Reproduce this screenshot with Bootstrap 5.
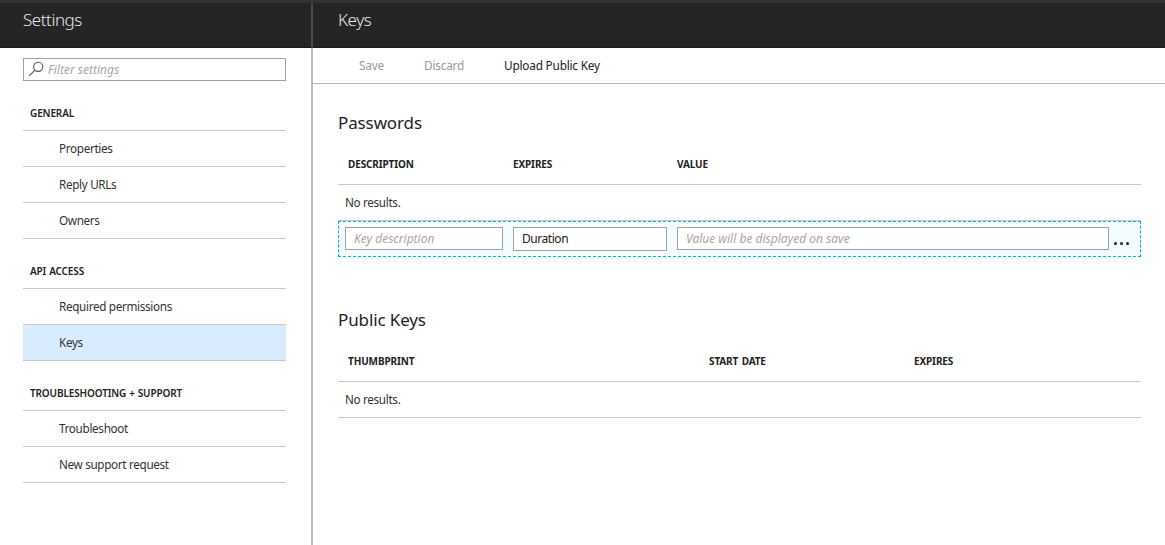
<!DOCTYPE html>
<html lang="en">
<head>
<meta charset="utf-8">
<meta name="viewport" content="width=device-width, initial-scale=1">
<title>Settings - Keys</title>
<link href="https://cdn.jsdelivr.net/npm/bootstrap@5.3.0/dist/css/bootstrap.min.css" rel="stylesheet">
<style>
body{font:11.7px/16px "Segoe UI","Noto Sans","Open Sans",sans-serif;letter-spacing:-.32px;color:#333;background:#fff;height:545px;overflow:hidden}
.topstrip{height:3px;background:#333}
.side{width:313px;border-right:2px solid #b8b8b8}
.blade-head{height:45px;background:#252525;color:#e8e8e8;border-bottom:1px solid #1d1a1d}
.side .blade-head{width:313px;border-right:2px solid #4b4b4b}
.blade-head h1{font-size:17px;line-height:22px;font-weight:300;letter-spacing:-.45px;padding:6px 0 0 25px}
.side .blade-head h1{padding-left:23px}
.side-body{width:263px;margin-left:23px}
.field{height:23px;border:1px solid #a0a1a2;border-radius:0;padding:0 8px 1px;font-size:12px;line-height:20px;color:#222;background:#fff;letter-spacing:0}
.field::placeholder{color:#a6a6a6;font-style:italic;opacity:1}
.field:focus{box-shadow:none}
.filter{margin-top:10px}
.filter .field{padding-left:24px}
.filter svg{left:5px;top:3px}
.sec{font-size:10px;font-weight:600;color:#222;letter-spacing:-.13px;word-spacing:.5px;padding:8px 7px 0;height:34px;line-height:16px;border-bottom:1px solid #c8c8c8}
.menu .list-group-item,.menu .list-group-item:last-child{height:36px;padding:9px 36px 0;border:0;border-bottom:1px solid #c8c8c8;color:#333;line-height:16px;background:#fff}
.menu .list-group-item.active{background:#d9ecff;color:#333;margin-top:0}
.menu{margin-bottom:16px}
.filter+.sec{margin-top:16px}
.toolbar{height:36px;border-bottom:1px solid #b8b8b8;padding:0 0 1px 46px}
.toolbar .btn{font-size:11.8px;line-height:16px;border:0;padding:0;letter-spacing:-.2px;color:#222;text-align:left}
.toolbar .btn:disabled{color:#999;opacity:1}
.cmd-save{width:65px}
.cmd-discard{width:80px}
.content{margin:0 24px 0 25px}
.content section{padding-top:27px}
.content section+section{padding-top:51px}
.content h2{font-size:17px;line-height:24px;font-weight:400;color:#222;letter-spacing:-.12px;margin-bottom:15px}
.cols{display:grid;height:35px;font-size:10px;font-weight:700;color:#222;letter-spacing:-.13px;word-spacing:1px;padding:6px 10px 0;border-bottom:1px solid #c8c8c8}
.cols-pw{grid-template-columns:165px 164px 1fr}
.cols-pk{grid-template-columns:361px 205px 1fr}
.none{height:36px;padding:9px 7px 0;border-bottom:1px solid #c8c8c8}
.newrow{display:grid;grid-template-columns:158px 154px 432px auto;column-gap:10px;height:36px;padding:5px 6px;border:1px dashed #00b3ee;background:#f3fcff}
.duration{height:24px;line-height:22px;letter-spacing:-.45px}
.dots{margin-left:-5px;padding-top:15px;gap:3px}
.dots i{width:3px;height:3px;border-radius:50%;background:#222}
</style>
</head>
<body>
<div class="topstrip"></div>
<div class="d-flex h-100">
  <aside class="side flex-shrink-0">
    <header class="blade-head"><h1 class="m-0">Settings</h1></header>
    <div class="side-body">
      <div class="filter position-relative">
        <input class="field form-control" type="text" placeholder="Filter settings" aria-label="Filter settings">
        <svg class="position-absolute" width="17" height="17" viewBox="0 0 17 17" fill="none" stroke="#555" stroke-width="1.1"><circle cx="10.2" cy="5.8" r="4.6"/><path d="M7 9.1 1.2 14.8"/></svg>
      </div>
      <div class="sec">GENERAL</div>
      <div class="menu list-group list-group-flush">
        <a class="list-group-item">Properties</a>
        <a class="list-group-item">Reply URLs</a>
        <a class="list-group-item">Owners</a>
      </div>
      <div class="sec">API ACCESS</div>
      <div class="menu list-group list-group-flush">
        <a class="list-group-item">Required permissions</a>
        <a class="list-group-item active">Keys</a>
      </div>
      <div class="sec">TROUBLESHOOTING + SUPPORT</div>
      <div class="menu list-group list-group-flush">
        <a class="list-group-item">Troubleshoot</a>
        <a class="list-group-item">New support request</a>
      </div>
    </div>
  </aside>
  <main class="flex-grow-1">
    <header class="blade-head"><h1 class="m-0">Keys</h1></header>
    <div class="toolbar d-flex align-items-center">
      <button class="btn cmd-save" disabled>Save</button>
      <button class="btn cmd-discard" disabled>Discard</button>
      <button class="btn">Upload Public Key</button>
    </div>
    <div class="content">
      <section>
        <h2>Passwords</h2>
        <div class="cols cols-pw"><span>DESCRIPTION</span><span>EXPIRES</span><span>VALUE</span></div>
        <div class="none">No results.</div>
        <div class="newrow">
          <input class="field form-control" type="text" placeholder="Key description" aria-label="Key description">
          <div class="field duration">Duration</div>
          <input class="field form-control" type="text" placeholder="Value will be displayed on save" aria-label="Value" readonly>
          <div class="dots d-flex"><i></i><i></i><i></i></div>
        </div>
      </section>
      <section>
        <h2>Public Keys</h2>
        <div class="cols cols-pk"><span>THUMBPRINT</span><span>START DATE</span><span>EXPIRES</span></div>
        <div class="none">No results.</div>
      </section>
    </div>
  </main>
</div>
<script src="https://cdn.jsdelivr.net/npm/bootstrap@5.3.0/dist/js/bootstrap.bundle.min.js"></script>
</body>
</html>
